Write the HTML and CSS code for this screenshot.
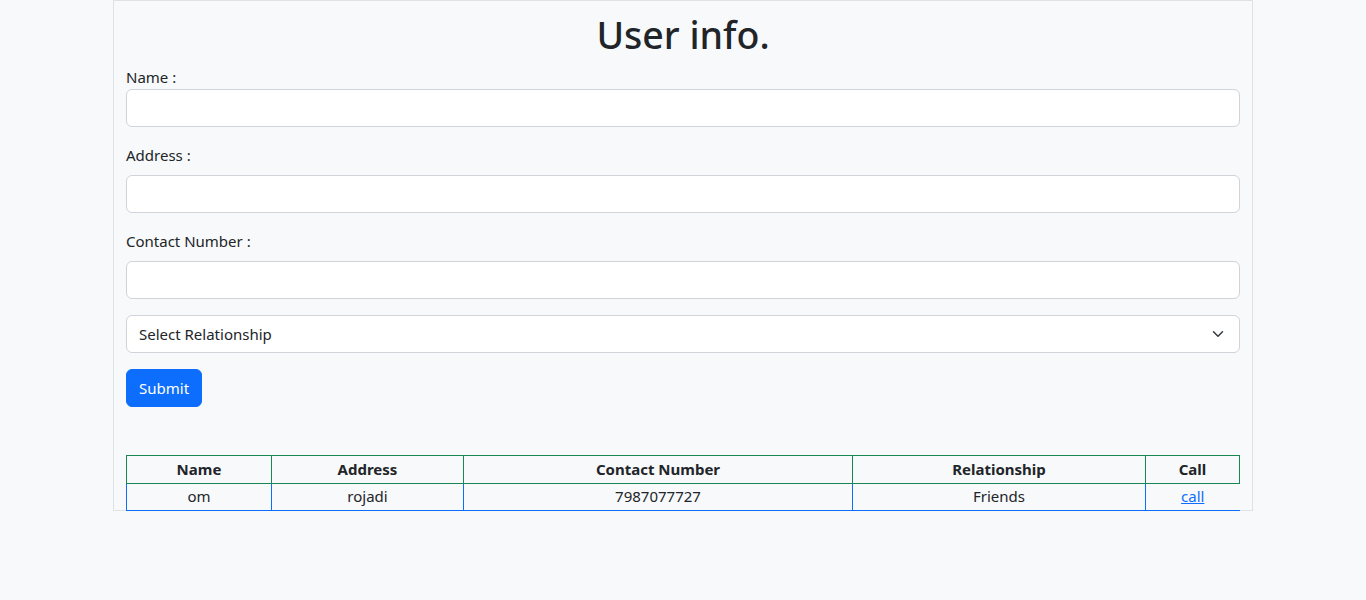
FILE: index.html
```html
<!DOCTYPE html>
<html lang="en">
<head>
<meta charset="utf-8">
<title>User info.</title>
<link rel="stylesheet" href="styles.css">
</head>
<body>
<div class="container">
  <h1 class="title">User info.</h1>
  <form class="form">
    <label class="label first">Name :</label>
    <input class="control" type="text">
    <label class="label">Address :</label>
    <input class="control" type="text">
    <label class="label">Contact Number :</label>
    <input class="control" type="text">
    <div class="select">
      <span>Select Relationship</span>
      <svg width="16" height="16" viewBox="0 0 16 16"><path d="M2 5l6 6 6-6" fill="none" stroke="#343a40" stroke-width="2" stroke-linecap="round" stroke-linejoin="round"/></svg>
    </div>
    <button class="btn" type="button">Submit</button>
  </form>
  <table class="table">
    <thead>
      <tr>
        <th class="c1">Name</th>
        <th class="c2">Address</th>
        <th class="c3">Contact Number</th>
        <th class="c4">Relationship</th>
        <th class="c5">Call</th>
      </tr>
    </thead>
    <tbody>
      <tr>
        <td>om</td>
        <td>rojadi</td>
        <td>7987077727</td>
        <td>Friends</td>
        <td class="last"><a href="#">call</a></td>
      </tr>
    </tbody>
  </table>
</div>
</body>
</html>
```
FILE: styles.css
```css
* { box-sizing: border-box; }
html, body { margin: 0; padding: 0; }
body {
  background: #f8f9fa;
  font-family: "Noto Sans", "Segoe UI", sans-serif;
  font-size: 15px;
  line-height: 24px;
  color: #212529;
}
.container {
  width: 1140px;
  margin: 0 auto;
  border: 1px solid #dee2e6;
  padding: 10px 12px 0;
  height: 511px;
}
.title {
  margin: 0 0 6px;
  text-align: center;
  font-size: 37.5px;
  font-weight: 500;
  line-height: 48px;
}
.form { display: flex; flex-direction: column; align-items: flex-start; }
.label { display: block; height: 24px; margin-top: 16px; margin-bottom: 8px; }
.label.first { margin-top: 0; margin-bottom: 0; }
.control {
  width: 100%;
  height: 38px;
  border: 1px solid #ced4da;
  border-radius: 6px;
  background: #fff;
  font: inherit;
  padding: 6px 12px;
}
.select {
  width: 100%;
  height: 38px;
  margin-top: 16px;
  border: 1px solid #ced4da;
  border-radius: 6px;
  background: #fff;
  padding: 6px 12px;
  display: flex;
  align-items: center;
  justify-content: space-between;
}
.select svg { width: 12px; height: 12px; margin-right: 3px; }
.btn {
  margin-top: 16px;
  height: 38px;
  width: 76px;
  padding: 6px 12px;
  background: #0d6efd;
  color: #fff;
  border: 1px solid #0d6efd;
  border-radius: 6px;
  font: inherit;
}
.table {
  margin-top: 48px;
  width: 100%;
  border-collapse: collapse;
  text-align: center;
}
.table th {
  border: 1px solid #198754;
  height: 28px;
  padding: 0 8px 1px;
  font-weight: 700;
}
.c1 { width: 145px; }
.c2 { width: 192px; }
.c3 { width: 389px; }
.c4 { width: 293px; }
.table td {
  border: 1px solid #0d6efd;
  border-top: none;
  height: 27px;
  padding: 0 8px 2px;
}
.table td.last { border-right: none; }
.table a { color: #0d6efd; }
```
